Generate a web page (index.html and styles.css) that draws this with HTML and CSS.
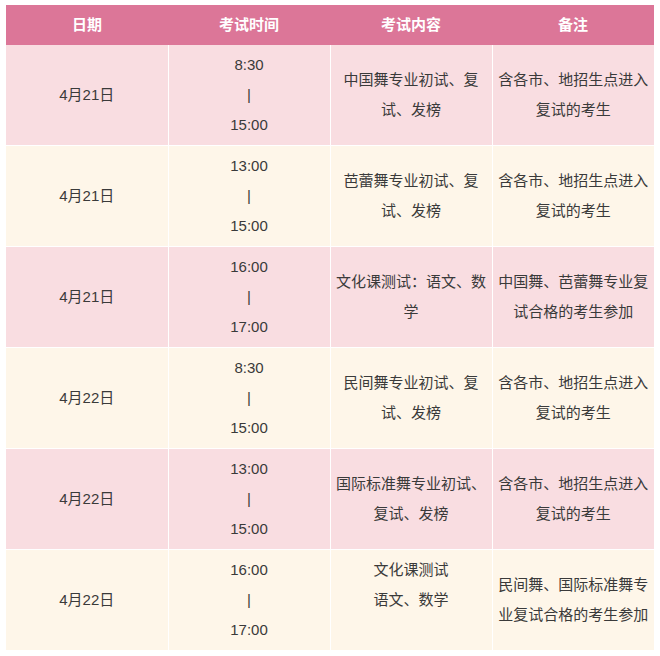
FILE: index.html
```html
<!DOCTYPE html>
<html lang="zh-CN">
<head>
<meta charset="utf-8">
<title>考试安排</title>
<link rel="stylesheet" href="styles.css">
</head>
<body>
<table class="schedule">
  <thead>
    <tr>
      <th>日期</th>
      <th>考试时间</th>
      <th>考试内容</th>
      <th>备注</th>
    </tr>
  </thead>
  <tbody>
    <tr class="pink">
      <td>4月21日</td>
      <td>8:30<br>|<br>15:00</td>
      <td>中国舞专业初试、复试、发榜</td>
      <td>含各市、地招生点进入复试的考生</td>
    </tr>
    <tr class="cream">
      <td>4月21日</td>
      <td>13:00<br>|<br>15:00</td>
      <td>芭蕾舞专业初试、复试、发榜</td>
      <td>含各市、地招生点进入复试的考生</td>
    </tr>
    <tr class="pink">
      <td>4月21日</td>
      <td>16:00<br>|<br>17:00</td>
      <td>文化课测试：语文、数学</td>
      <td>中国舞、芭蕾舞专业复试合格的考生参加</td>
    </tr>
    <tr class="cream">
      <td>4月22日</td>
      <td>8:30<br>|<br>15:00</td>
      <td>民间舞专业初试、复试、发榜</td>
      <td>含各市、地招生点进入复试的考生</td>
    </tr>
    <tr class="pink">
      <td>4月22日</td>
      <td>13:00<br>|<br>15:00</td>
      <td>国际标准舞专业初试、复试、发榜</td>
      <td>含各市、地招生点进入复试的考生</td>
    </tr>
    <tr class="cream">
      <td>4月22日</td>
      <td>16:00<br>|<br>17:00</td>
      <td>文化课测试<br>语文、数学<br>&nbsp;</td>
      <td>民间舞、国际标准舞专业复试合格的考生参加</td>
    </tr>
  </tbody>
</table>
</body>
</html>
```
FILE: styles.css
```css
html, body {
  margin: 0;
  padding: 0;
  background: #ffffff;
}
body {
  padding: 5px 6px;
  font-family: "Liberation Sans", "Noto Sans CJK SC", sans-serif;
  font-size: 15px;
  color: #3a3a3a;
}
.schedule {
  width: 648px;
  border-collapse: collapse;
  table-layout: fixed;
}
.schedule th {
  background: #dc7698;
  color: #ffffff;
  font-weight: bold;
  line-height: 30px;
  height: 30px;
  padding: 5px 5px;
  text-align: center;
  border: none;
}
.schedule td {
  border: 1px solid #ffffff;
  padding: 5px 5px;
  line-height: 30px;
  text-align: center;
  vertical-align: middle;
  height: 90px;
}
.schedule tbody tr:first-child td {
  border-top: none;
}
.schedule td:first-child {
  border-left: none;
}
.schedule td:last-child {
  border-right: none;
}
.pink td {
  background: #f9dde1;
}
.cream td {
  background: #fef6e9;
}
```
